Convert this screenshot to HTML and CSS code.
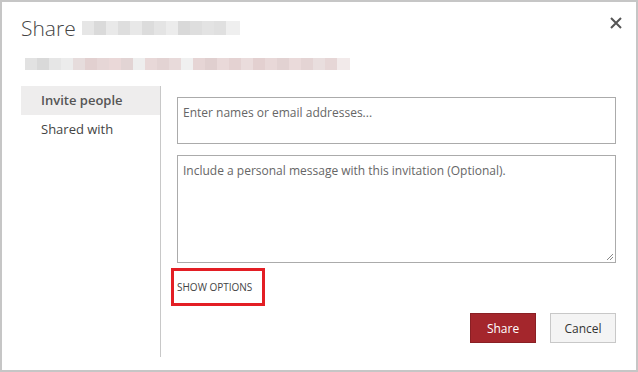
FILE: index.html
```html
<!DOCTYPE html>
<html lang="en">
<head>
    <meta charset="UTF-8">
    <link rel="stylesheet" href="styles.css">
</head>
<body>
    <div class="dialog">
        <div class="head">
            <h1 class="title">Share <span class="blur blur-name"></span></h1>
            <button class="close" title="Close">
                <svg width="12" height="12" viewBox="0 0 12 12"><path d="M1 1L11 11M11 1L1 11" stroke="#555" stroke-width="2"/></svg>
            </button>
        </div>
        <div class="blur blur-path"></div>

        <div class="content">
            <ul class="nav">
                <li class="active">Invite people</li>
                <li>Shared with</li>
            </ul>
            <div class="main">
                <div class="field">Enter names or email addresses...</div>
                <div class="field message">Include a personal message with this invitation (Optional).
                    <svg class="grip" width="8" height="8" viewBox="0 0 8 8"><path d="M7 1L1 7M7 4L4 7" stroke="#888" stroke-width="1"/></svg>
                </div>
                <a class="options">SHOW OPTIONS</a>
                <div class="buttons">
                    <button class="btn primary">Share</button>
                    <button class="btn">Cancel</button>
                </div>
            </div>
        </div>
    </div>
</body>
</html>
```

FILE: styles.css
```css
*{
    box-sizing: border-box;
}
body{
    margin: 0;
    background: white;
    font-family: "Open Sans", "Noto Sans", sans-serif;
    color: #333;
}
.dialog{
    width: 638px;
    height: 372px;
    border: 2px solid #c6c6c6;
    padding: 0 20px 0 19px;
    background: white;
}
.head{
    display: flex;
    justify-content: space-between;
}
.title{
    margin: 12px 0 0 0;
    font-size: 21px;
    line-height: 28px;
    font-weight: 300;
    color: #444;
    display: flex;
    align-items: center;
}
.blur{
    display: inline-block;
}
.blur-name{
    width: 158px;
    height: 14px;
    margin-left: 6px;
    background: linear-gradient(90deg, #e6e6e6 0 12px, #dadada 12px 24px, #e9e9e9 24px 36px, #dedede 36px 48px, #e8e8e8 48px 60px, #dcdcdc 60px 72px, #e4e4e4 72px 84px, #ececec 84px 96px, #d9d9d9 96px 108px, #dedede 108px 120px, #e3e3e3 120px 132px, #e0e0e0 132px 144px, #efefef 144px 158px);
}
.close{
    border: none;
    background: none;
    padding: 0;
    margin: 15px 0 0 0;
    width: 12px;
    height: 12px;
    margin-right: -6px;
}
.blur-path{
    display: block;
    width: 325px;
    height: 12px;
    margin: 16px 0 0 4px;
    background: linear-gradient(90deg, #e2e2e2 0 12px, #d9d9d9 12px 24px, #e6e6e6 24px 36px, #ececec 36px 48px, #e6dcdc 48px 60px, #e2d0d0 60px 72px, #e6d6d6 72px 84px, #ead8d8 84px 96px, #e2d4d4 96px 108px, #eeeeee 108px 120px, #e8d8d8 120px 132px, #e3d3d3 132px 144px, #e8dada 144px 156px, #f0f0f0 156px 168px, #e6d5d5 168px 180px, #e0cfcf 180px 192px, #e9d9d9 192px 204px, #e4d2d2 204px 216px, #eadcdc 216px 228px, #e3d0d0 228px 240px, #e8d8d8 240px 252px, #e2d2d2 252px 264px, #eadada 264px 276px, #e4d4d4 276px 288px, #e9dede 288px 300px, #e6d6d6 300px 312px, #f2eaea 312px 325px);
}
.content{
    display: flex;
    margin-top: 16px;
}
.nav{
    list-style: none;
    margin: 0;
    padding: 0;
    width: 140px;
    height: 271px;
    border-right: 1px solid #c8c8c8;
    font-size: 13px;
}
.nav li{
    height: 29px;
    line-height: 29px;
    padding-left: 20px;
    color: #444;
}
.nav li.active{
    background: #eeeded;
    font-weight: 600;
    color: #555;
}
.main{
    flex: 1;
    padding-left: 16px;
}
.field{
    height: 47px;
    margin-top: 11px;
    border: 1px solid #ababab;
    padding: 6px 5px;
    font-size: 12px;
    color: #666;
    position: relative;
}
.message{
    height: 108px;
}
.grip{
    position: absolute;
    right: 1px;
    bottom: 1px;
}
.options{
    display: inline-block;
    margin: 5px 0 0 -6px;
    width: 94px;
    height: 38px;
    line-height: 32px;
    border: 3px solid #e31e24;
    padding-left: 3px;
    font-size: 10px;
    color: #444;
}
.buttons{
    display: flex;
    justify-content: flex-end;
    gap: 14px;
    margin-top: 7px;
}
.btn{
    width: 66px;
    height: 30px;
    border: 1px solid #c8c8c8;
    background: #f4f4f4;
    font-family: "Open Sans", "Noto Sans", sans-serif;
    font-size: 12px;
    color: #333;
}
.btn.primary{
    background: #a4262c;
    border-color: #8a1f24;
    color: white;
}
```
